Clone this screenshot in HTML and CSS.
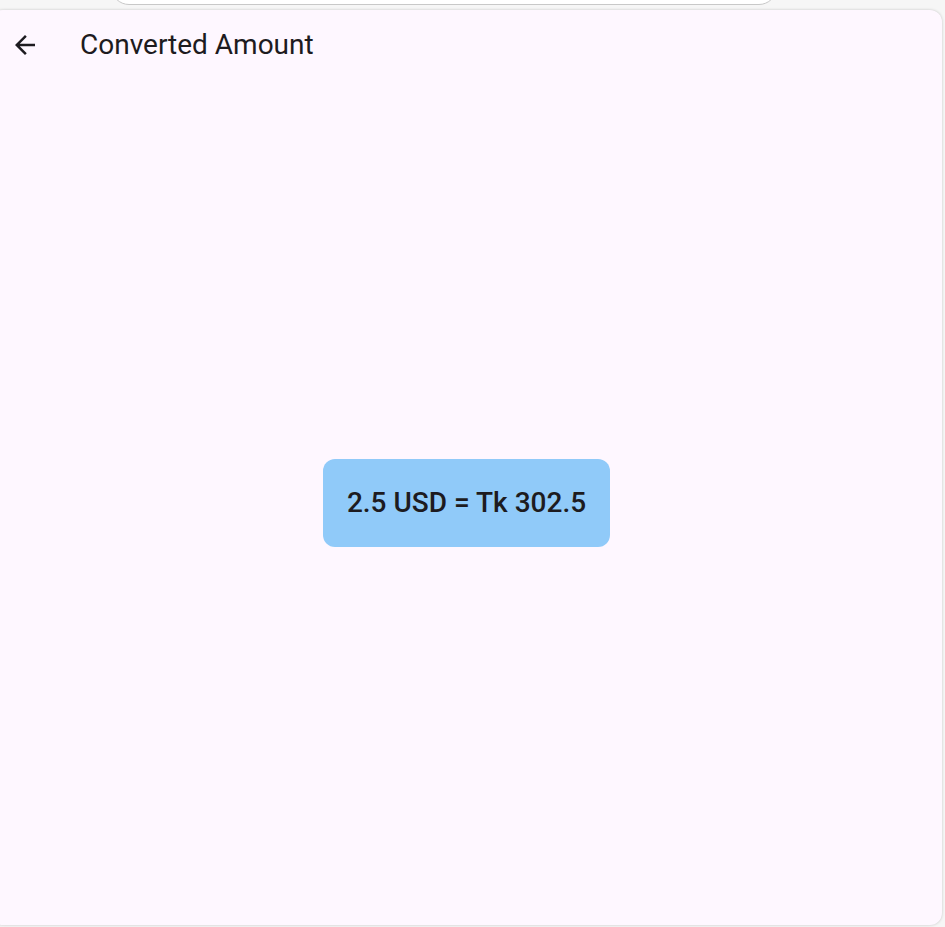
FILE: index.html
```html
<!DOCTYPE html>
<html lang="en">
<head>
<meta charset="utf-8">
<meta name="viewport" content="width=device-width, initial-scale=1">
<title>Converted Amount</title>
<link rel="stylesheet" href="styles.css">
</head>
<body>
<div class="toolbar"><input class="address" type="text" aria-label="Address"></div>
<main class="screen">
  <header class="app-bar">
    <button class="back" type="button" aria-label="Back">
      <svg viewBox="4 4 16 16" width="20" height="20" aria-hidden="true"><path fill="currentColor" d="M20 11H7.83l5.59-5.59L12 4l-8 8 8 8 1.41-1.41L7.83 13H20v-2z"/></svg>
    </button>
    <h1 class="title">Converted Amount</h1>
  </header>
  <section class="content">
    <p class="result">2.5 USD = Tk 302.5</p>
  </section>
</main>
</body>
</html>
```
FILE: styles.css
```css
* { box-sizing: border-box; }

body {
  display: flex;
  flex-direction: column;
  height: 100vh;
  margin: 0;
  overflow: hidden;
  background: #f6f6f6;
  color: #1d1b20;
  font-family: Roboto, "Liberation Sans", sans-serif;
}

.toolbar {
  display: flex;
  flex: none;
  align-items: flex-end;
  justify-content: center;
  height: 10px;
  padding: 0 57px 5px 0;
}

.address {
  flex: none;
  width: 75%;
  height: 36px;
  border: 1px solid #c8c8c8;
  border-radius: 18px;
  background: #fff;
}

.screen {
  display: flex;
  flex: 1;
  flex-direction: column;
  margin: 0 3px 2px -9px;
  border-radius: 12px;
  background: #fef7ff;
  box-shadow: 0 0 3px rgba(0, 0, 0, 0.2);
}

.app-bar {
  display: flex;
  flex: none;
  align-items: center;
  gap: 36px;
  height: 70px;
  padding: 0 15px;
}

.back {
  display: flex;
  align-items: center;
  justify-content: center;
  width: 38px;
  height: 40px;
  padding: 0;
  border: 0;
  background: none;
  color: inherit;
}

.title {
  margin: 0;
  font-size: 28px;
  font-weight: 400;
  line-height: 36px;
}

.content {
  display: flex;
  flex: 1;
  align-items: center;
  justify-content: center;
}

.result {
  margin: 0;
  padding: 26px 24px;
  border-radius: 12px;
  background: #90caf9;
  font-size: 28px;
  font-weight: 500;
  line-height: 36px;
}
```
